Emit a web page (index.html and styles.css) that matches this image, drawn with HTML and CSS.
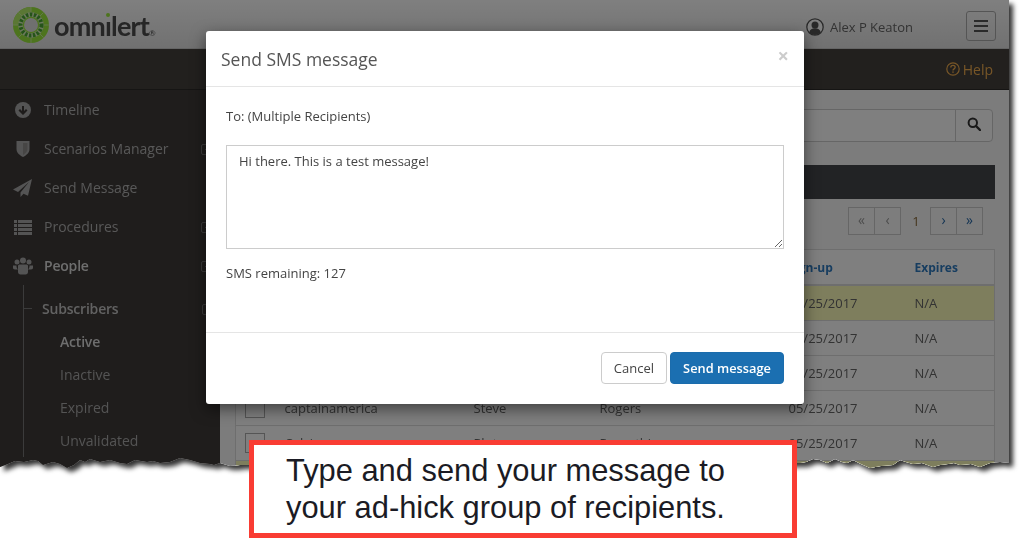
FILE: index.html
```html
<!DOCTYPE html>
<html lang="en">
<head>
  <meta charset="UTF-8" />
  <title>Omnilert - Send SMS message</title>
  <link rel="stylesheet" href="styles.css">
</head>
<body>
  <div class="shot">
    <div class="frame">
      <div class="app">
        <header class="topbar">
          <a class="logo">
            <svg class="logo-mark" width="38" height="38" viewBox="0 0 38 38">
              <circle cx="19" cy="19" r="18" fill="#9ae83c"/>
              <path d="M19 1C9 1 1 9 1 19h8c0-5.500 4.500-10 10-10z" fill="#b4ee68"/>
              <g stroke="#c8f09a" stroke-width="1">
                <path d="M19 1v8M19 29v8M1 19h8M29 19h8M6.300 6.300l6 6M25.700 25.700l6 6M6.300 31.700l6-6M25.700 12.300l6-6"/>
              </g>
              <circle cx="19" cy="19" r="10.500" fill="none" stroke="#d8f0b8" stroke-width="4.500"/>
              <circle cx="19" cy="19" r="10.500" fill="none" stroke="#4aa832" stroke-width="4" stroke-dasharray="2.500 1.500"/>
              <circle cx="19" cy="19" r="7" fill="#e0e0e0"/>
            </svg>
            <span class="logo-word">omn<span class="logo-i">ı</span>lert<small>®</small></span>
          </a>
          <div class="user">
            <svg width="18" height="18" viewBox="0 0 18 18">
              <circle cx="9" cy="9" r="8.200" fill="#fff" stroke="#555" stroke-width="1.300"/>
              <circle cx="9" cy="7" r="3.500" fill="#555"/>
              <path d="M3.200 14.500c.6-3 3-4.200 5.800-4.200s5.200 1.200 5.800 4.200A8 8 0 0 1 9 17a8 8 0 0 1-5.800-2.500z" fill="#555"/>
            </svg>
            <span>Alex P Keaton</span>
          </div>
          <button class="menu-btn"><span></span><span></span><span></span></button>
        </header>
        <div class="helpbar">
          <a class="help">
            <svg width="14" height="14" viewBox="0 0 14 14">
              <circle cx="7" cy="7" r="6.200" fill="none" stroke="currentColor" stroke-width="1.200"/>
              <path d="M4.800 5.400c0-1.300 1-2 2.200-2s2.200.8 2.200 1.900c0 1.600-2.200 1.600-2.200 3.200" fill="none" stroke="currentColor" stroke-width="1.300"/>
              <rect x="6.300" y="9.400" width="1.400" height="1.400" fill="currentColor"/>
            </svg>
            Help
          </a>
        </div>
        <div class="columns">
          <nav class="sidebar">
            <a class="nav-item">
              <svg class="nav-icon" width="20" height="18" viewBox="0 0 20 18">
                <circle cx="10" cy="9" r="8"/>
                <path d="M10 14l-4.500-4.500 1.500-1.500 2 2V5h2v5l2-2 1.500 1.500z" fill="#3c3836"/>
              </svg>
              Timeline
            </a>
            <a class="nav-item">
              <svg class="nav-icon" width="20" height="18" viewBox="0 0 20 18">
                <path d="M3.500 1h13v8c0 4-3.500 6.500-6.500 8-3-1.500-6.500-4-6.500-8z"/>
                <path d="M10 3h4.500v6c0 2.800-2.400 4.800-4.500 5.900z" fill="#8f8d8b"/>
              </svg>
              Scenarios Manager<i class="expander"></i>
            </a>
            <a class="nav-item">
              <svg class="nav-icon" width="20" height="18" viewBox="0 0 20 18">
                <path d="M19 0L0 10.500l5 2.500L16 3 7.500 13.500V18l3-3.200 4.500 2z"/>
              </svg>
              Send Message
            </a>
            <a class="nav-item">
              <svg class="nav-icon" width="20" height="18" viewBox="0 0 20 18">
                <path d="M1 2h3v3H1zM5 2h14v3H5zM1 6h3v3H1zM5 6h14v3H5zM1 10h3v3H1zM5 10h14v3H5zM1 14h3v3H1zM5 14h14v3H5z"/>
              </svg>
              Procedures<i class="expander"></i>
            </a>
            <a class="nav-item is-open">
              <svg class="nav-icon" width="20" height="18" viewBox="0 0 20 18">
                <circle cx="4" cy="5" r="2.500"/><circle cx="16" cy="5" r="2.500"/><circle cx="10" cy="3.500" r="3"/>
                <path d="M0 8.500h3.500c-.2 1.500.5 3 1.500 4H2c-1.500 0-2-1-2-2zM20 8.500h-3.500c.2 1.500-.5 3-1.500 4h3c1.500 0 2-1 2-2z"/>
                <path d="M5 9c0-1 .8-1.500 2-1.500h6c1.200 0 2 .5 2 1.500v6c0 1.500-1 2.500-2.500 2.500h-5C6 17.500 5 16.500 5 15z"/>
              </svg>
              People<i class="expander"></i>
            </a>
            <div class="subnav">
              <a class="sub-head">Subscribers<i class="expander"></i></a>
              <a class="sub-item is-active">Active</a>
              <a class="sub-item">Inactive</a>
              <a class="sub-item">Expired</a>
              <a class="sub-item">Unvalidated</a>
            </div>
          </nav>
          <main class="content">
            <div class="searchbar">
              <input class="search-input" type="text">
              <button class="search-btn">
                <svg width="14" height="14" viewBox="0 0 14 14">
                  <circle cx="5.800" cy="5.800" r="4.200" fill="none" stroke="#333" stroke-width="2"/>
                  <path d="M9 9l4 4" stroke="#333" stroke-width="2.400" stroke-linecap="round"/>
                </svg>
              </button>
            </div>
            <div class="panel-title"></div>
            <div class="pager">
              <span class="pager-group">
                <a class="page-link is-off">«</a><a class="page-link is-off">‹</a>
              </span>
              <span class="page-current">1</span>
              <span class="pager-group">
                <a class="page-link">›</a><a class="page-link">»</a>
              </span>
            </div>
            <table class="people">
              <colgroup>
                <col class="c-check"><col class="c-user"><col class="c-first"><col class="c-last"><col class="c-date"><col class="c-exp">
              </colgroup>
              <thead>
                <tr><th></th><th></th><th></th><th></th><th>Sign-up</th><th>Expires</th></tr>
              </thead>
              <tbody>
                <tr class="is-new"><td><i class="check"></i></td><td></td><td></td><td></td><td>05/25/2017</td><td>N/A</td></tr>
                <tr><td><i class="check"></i></td><td></td><td></td><td></td><td>05/25/2017</td><td>N/A</td></tr>
                <tr><td><i class="check"></i></td><td></td><td></td><td></td><td>05/25/2017</td><td>N/A</td></tr>
                <tr><td><i class="check"></i></td><td>captainamerica</td><td>Steve</td><td>Rogers</td><td>05/25/2017</td><td>N/A</td></tr>
                <tr><td><i class="check"></i></td><td>Calvin</td><td>Pluto</td><td>Parenthia</td><td>05/25/2017</td><td>N/A</td></tr>
                <tr class="is-new"><td></td><td></td><td></td><td></td><td></td><td></td></tr>
              </tbody>
            </table>
          </main>
        </div>
        <div class="scrim">
          <div class="modal">
            <div class="modal-head">
              <h4>Send SMS message</h4>
              <span class="close">×</span>
            </div>
            <div class="modal-body">
              <p class="to-line">To: (Multiple Recipients)</p>
              <textarea class="msg">Hi there. This is a test message!</textarea>
              <p class="remaining">SMS remaining: 127</p>
            </div>
            <div class="modal-foot">
              <button class="btn">Cancel</button>
              <button class="btn btn-primary">Send message</button>
            </div>
          </div>
        </div>
      </div>
    </div>
    <div class="callout">Type and send your message to<br>your ad-hick group of recipients.</div>
  </div>
</body>
</html>
```

FILE: styles.css
```css
html, body {
  margin: 0;
  height: 100%;
  overflow: hidden;
  background: #fff;
}
body {
  font-family: 'Open Sans', 'DejaVu Sans', sans-serif;
  font-size: 13px;
  color: #555;
}
.shot {
  position: relative;
  width: 1020px;
  height: 545px;
}
.frame {
  filter: drop-shadow(4px 4px 2.5px rgba(0, 0, 0, 0.8));
}
/* torn bottom edge of the screenshot */
.app {
  position: relative;
  width: 1010px;
  height: 475px;
  background: #f6f6f6;
  clip-path: polygon(0 0, 1009px 0, 1009px 463px, 1000px 462px, 990px 463px, 985px 465px, 980px 467px, 971px 464px, 960px 465px, 954px 463px, 948px 464px, 940px 465px, 933px 467px, 922px 463px, 913px 464px, 906px 462px, 900px 460px, 893px 465px, 881px 466px, 870px 468px, 861px 464px, 853px 460px, 847px 463px, 842px 462px, 835px 459px, 827px 463px, 820px 460px, 813px 459px, 806px 462px, 800px 463px, 240px 465px, 230px 466px, 220px 463px, 214px 465px, 210px 464px, 200px 463px, 190px 460px, 180px 458px, 170px 462px, 160px 463px, 153px 461px, 147px 462px, 135px 460px, 127px 464px, 120px 463px, 110px 460px, 100px 462px, 90px 459px, 85px 462px, 80px 460px, 74px 465px, 67px 468px, 60px 464px, 53px 462px, 43px 465px, 38px 461px, 33px 460px, 24px 462px, 15px 461px, 8px 464px, 0 467px);
}
.topbar {
  display: flex;
  align-items: center;
  box-sizing: border-box;
  height: 49px;
  padding: 6px 14px 0 12px;
  background: linear-gradient(to bottom, #fff, #e2e2e2);
  border-bottom: 1px solid #c8c8c8;
}
.logo {
  display: flex;
  align-items: center;
  gap: 4px;
  margin-right: auto;
  margin-top: -4px;
}
.logo-word {
  font-family: Lato, sans-serif;
  font-weight: 700;
  font-size: 27px;
  letter-spacing: -0.8px;
  color: #4c4c4c;
  line-height: 1;
}
.logo-word small {
  font-size: 8px;
  font-weight: 400;
  letter-spacing: 0;
}
.logo-i {
  position: relative;
}
.logo-i::before {
  content: "";
  position: absolute;
  left: 1.500px;
  top: 4px;
  width: 4px;
  height: 4px;
  border-radius: 50%;
  background: #9ae83c;
}
.user {
  display: flex;
  align-items: center;
  gap: 6px;
  margin-right: 53px;
  color: #666;
  font-size: 13px;
}
.menu-btn {
  display: flex;
  flex-direction: column;
  justify-content: center;
  gap: 3px;
  width: 30px;
  height: 30px;
  margin-top: -3px;
  padding: 0 7px;
  background: transparent;
  border: 1px solid #aaa;
  border-radius: 3px;
}
.menu-btn span {
  display: block;
  height: 2px;
  background: #555;
}
.helpbar {
  display: flex;
  justify-content: flex-end;
  align-items: center;
  height: 40px;
  padding-right: 17px;
  background: #44403c;
  border-bottom: 1px solid #2c2a28;
}
.help {
  display: flex;
  align-items: center;
  gap: 3px;
  color: #f0ac4e;
  font-size: 14px;
}
.columns {
  display: flex;
  height: 386px;
}
.sidebar {
  flex: 0 0 220px;
  background: #3e3a38;
  overflow: hidden;
}
.nav-item {
  display: flex;
  align-items: center;
  height: 39px;
  padding-left: 13px;
  color: #b0b0b0;
  font-size: 14px;
  position: relative;
}
.nav-item.is-open {
  color: #ddd;
  font-weight: 600;
  letter-spacing: -0.2px;
}
.nav-icon {
  margin-right: 11px;
  fill: #a8a8a8;
}
.expander {
  position: absolute;
  left: 201px;
  top: 50%;
  width: 10px;
  height: 9px;
  margin-top: -5px;
  border: 1px solid #777;
  border-radius: 2px;
  background: linear-gradient(#777, #777) center / 5px 1px no-repeat;
}
.subnav {
  position: relative;
  padding-top: 7px;
  border-left: 1px solid #777;
  margin-left: 23px;
}
.subnav::before {
  content: "";
  position: absolute;
  left: 0;
  top: 23px;
  width: 8px;
  height: 1px;
  background: #777;
}
.sub-head {
  display: block;
  position: relative;
  height: 33px;
  line-height: 33px;
  padding-left: 18px;
  color: #c4c4c4;
  font-size: 14px;
  font-weight: 600;
  letter-spacing: -0.2px;
}
.sub-head .expander {
  left: 178px;
}
.sub-item {
  display: block;
  height: 33px;
  line-height: 33px;
  padding-left: 36px;
  color: #a8a8a8;
  font-size: 14px;
}
.sub-item.is-active {
  color: #ddd;
  font-weight: 600;
  letter-spacing: -0.2px;
}
.content {
  flex: 1;
  min-width: 0;
  padding: 19px 15px 0;
  background: #f8f8f8;
}
.searchbar {
  display: flex;
  height: 33px;
  margin-right: 2px;
  border: 1px solid #ccc;
  border-radius: 4px;
  background: #fff;
  box-sizing: border-box;
}
.search-input {
  flex: 1;
  border: 0;
  background: transparent;
}
.search-btn {
  width: 37px;
  padding: 0;
  border: 0;
  border-left: 1px solid #ccc;
  background: transparent;
}
.panel-title {
  height: 34px;
  margin-top: 23px;
  background: #44464a;
}
.pager {
  display: flex;
  justify-content: flex-end;
  align-items: center;
  height: 28px;
  margin: 8px 12px 14px 0;
}
.pager-group {
  display: flex;
}
.page-link {
  width: 25px;
  height: 26px;
  line-height: 24px;
  text-align: center;
  border: 1px solid #ccc;
  margin-left: -1px;
  color: #2a6aa8;
  font-size: 14px;
  background: #fafafa;
}
.page-link.is-off {
  color: #999;
}
.page-current {
  width: 30px;
  text-align: center;
  color: #8a6a3a;
  font-size: 13px;
}
.people {
  table-layout: fixed;
  width: 759px;
  border-collapse: collapse;
  background: #fff;
  border: 1px solid #ddd;
  color: #666;
}
.c-check { width: 41px; }
.c-user { width: 189px; }
.c-first { width: 126px; }
.c-last { width: 189px; }
.c-date { width: 126px; }
.c-exp { width: 88px; }
.people th {
  height: 34px;
  padding: 0 8px;
  text-align: left;
  font-size: 12px;
  font-weight: 700;
  color: #2f7bc0;
  border-bottom: 2px solid #ddd;
}
.people td {
  height: 34px;
  padding: 0 8px;
  border-top: 1px solid #ddd;
}
.people tr.is-new td {
  background: #fdfdbb;
}
.people tbody tr:first-child td {
  border-top: 0;
}
.check {
  display: block;
  width: 18px;
  height: 18px;
  margin-left: 1px;
  border: 1px solid #aaa;
  background: #fff;
}
.scrim {
  position: absolute;
  left: 0;
  top: 0;
  right: 0;
  bottom: 0;
  display: flex;
  justify-content: center;
  align-items: flex-start;
  padding-top: 31px;
  background: rgba(0, 0, 0, 0.5);
}
.modal {
  width: 598px;
  background: #fff;
  border-radius: 3px;
  box-shadow: 0 5px 15px rgba(0, 0, 0, 0.5);
  color: #444;
}
.modal-head {
  display: flex;
  align-items: center;
  justify-content: space-between;
  height: 55px;
  padding: 0 15px;
  border-bottom: 1px solid #e5e5e5;
}
.modal-head h4 {
  margin: 0;
  font-size: 17.500px;
  font-weight: 400;
  color: #555;
}
.close {
  margin-top: -6px;
  font-size: 20px;
  font-weight: 700;
  color: #ccc;
  line-height: 1;
}
.modal-body {
  height: 205px;
  padding: 20px;
}
.to-line, .remaining {
  margin: 0;
  line-height: 18px;
}
.msg {
  display: block;
  box-sizing: border-box;
  width: 558px;
  height: 104px;
  margin-top: 20px;
  padding: 6px 12px;
  border: 1px solid #ccc;
  font-family: inherit;
  font-size: 13px;
  line-height: 18px;
  color: #444;
}
.remaining {
  margin-top: 15px;
}
.modal-foot {
  display: flex;
  justify-content: flex-end;
  gap: 3px;
  padding: 19px 20px 20px;
  border-top: 1px solid #e5e5e5;
}
.btn {
  height: 32px;
  padding: 0 12px;
  border: 1px solid #ccc;
  border-radius: 4px;
  background: #fff;
  font-family: inherit;
  font-size: 13px;
  color: #444;
}
.btn-primary {
  width: 114px;
  padding: 0;
  border-color: #1b6cac;
  background: #1b6fb1;
  color: #fff;
  font-size: 12.800px;
  font-weight: 600;
}
.callout {
  position: absolute;
  left: 249px;
  top: 440px;
  box-sizing: border-box;
  width: 548px;
  height: 98px;
  padding: 7px 0 0 32px;
  border: 5px solid #f93c33;
  background: #fff;
  font-family: 'Liberation Sans', Arial, sans-serif;
  font-size: 30.850px;
  line-height: 37px;
  color: #1b1b24;
}
```
